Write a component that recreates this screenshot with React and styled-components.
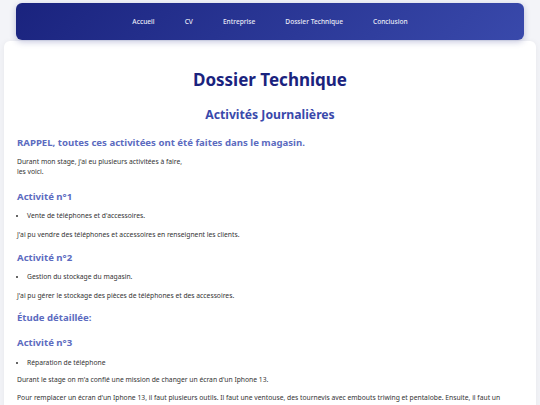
import styled, { createGlobalStyle } from "styled-components";

const GlobalStyles = createGlobalStyle`
  body {
    margin: 0;
    background: #f3f4f8;
    font-family: "Noto Sans", "Open Sans", sans-serif;
    color: #333;
  }
`;

const links = ["Accueil", "CV", "Entreprise", "Dossier Technique", "Conclusion"];

const activities = [
  {
    title: "Activité n°1",
    space: "13px",
    item: "Vente de téléphones et d'accessoires.",
    text: "J'ai pu vendre des téléphones et accessoires en renseignent les clients.",
  },
  {
    title: "Activité n°2",
    space: "11px",
    item: "Gestion du stockage du magasin.",
    text: "J'ai pu gérer le stockage des pièces de téléphones et des accessoires.",
  },
];

function App() {
  return (
    <Page>
      <GlobalStyles />
      <Nav>
        {links.map((l) => (
          <NavLink key={l} href="#">{l}</NavLink>
        ))}
      </Nav>
      <Card>
        <Title>Dossier Technique</Title>
        <Subtitle>Activités Journalières</Subtitle>
        <Heading $top="12px" $bottom="7px">
          RAPPEL, toutes ces activitées ont été faites dans le magasin.
        </Heading>
        <Text>
          Durant mon stage, j'ai eu plusieurs activitées à faire,
          <br />
          les voici.
        </Text>

        {activities.map((a) => (
          <section key={a.title}>
            <Heading $top={a.space} $bottom="7px">{a.title}</Heading>
            <List>
              <li>{a.item}</li>
            </List>
            <Text>{a.text}</Text>
          </section>
        ))}

        <Heading $top="10px" $bottom="0">Étude détaillée:</Heading>
        <Heading $top="11px" $bottom="8px">Activité n°3</Heading>
        <List $tight>
          <li>Réparation de téléphone</li>
        </List>
        <Text>Durant le stage on m'a confié une mission de changer un écran d'un Iphone 13.</Text>
        <Text>
          Pour remplacer un écran d'un Iphone 13, il faut plusieurs outils. Il faut une ventouse, des tournevis avec embouts triwing et pentalobe. Ensuite, il faut un
          écran de remplacement compatible, une spatule et un pistolet à chaleur pour décoller l'ancien écran.
        </Text>
      </Card>
    </Page>
  );
}

const Page = styled.div`
  min-height: 405px;
  padding: 3px 4px 0;
  box-sizing: border-box;
`;

const Nav = styled.nav`
  margin: 0 12px;
  height: 37px;
  border-radius: 6px;
  background: linear-gradient(135deg, #1a237e 0%, #3949ab 100%);
  box-shadow: 0 2px 6px rgba(26, 35, 126, 0.25);
  display: flex;
  align-items: center;
  justify-content: center;
  gap: 30px;
  position: relative;
  z-index: 1;
`;

const NavLink = styled.a`
  color: #e8eaf6;
  text-decoration: none;
  font-size: 6.6px;
  font-weight: 500;
`;

const Card = styled.main`
  margin-top: 1px;
  background: #fff;
  border-radius: 6px;
  box-shadow: 0 1px 6px rgba(0, 0, 0, 0.06);
  padding: 28px 13px 20px;
  overflow: hidden;
`;

const Title = styled.h1`
  margin: 0;
  text-align: center;
  font-size: 17px;
  line-height: 22px;
  font-weight: 700;
  color: #1a237e;
`;

const Subtitle = styled.h2`
  margin: 15px 0 0;
  text-align: center;
  font-size: 12.2px;
  line-height: 18px;
  font-weight: 700;
  color: #3949ab;
`;

const Heading = styled.h3`
  margin: ${(p) => p.$top || "12px"} 0 ${(p) => p.$bottom || "6px"};
  font-size: 9.6px;
  line-height: 14px;
  font-weight: 700;
  color: #5c6bc0;
`;

const Text = styled.p`
  margin: 0 0 8px;
  max-width: 498px;
  font-size: 6.75px;
  line-height: 10px;
  color: #333;
`;

const List = styled.ul`
  margin: 0 0 ${(p) => (p.$tight ? "7px" : "9px")};
  padding-left: 10px;
  font-size: 6.75px;
  line-height: 10px;
  color: #333;
`;

export default App;
